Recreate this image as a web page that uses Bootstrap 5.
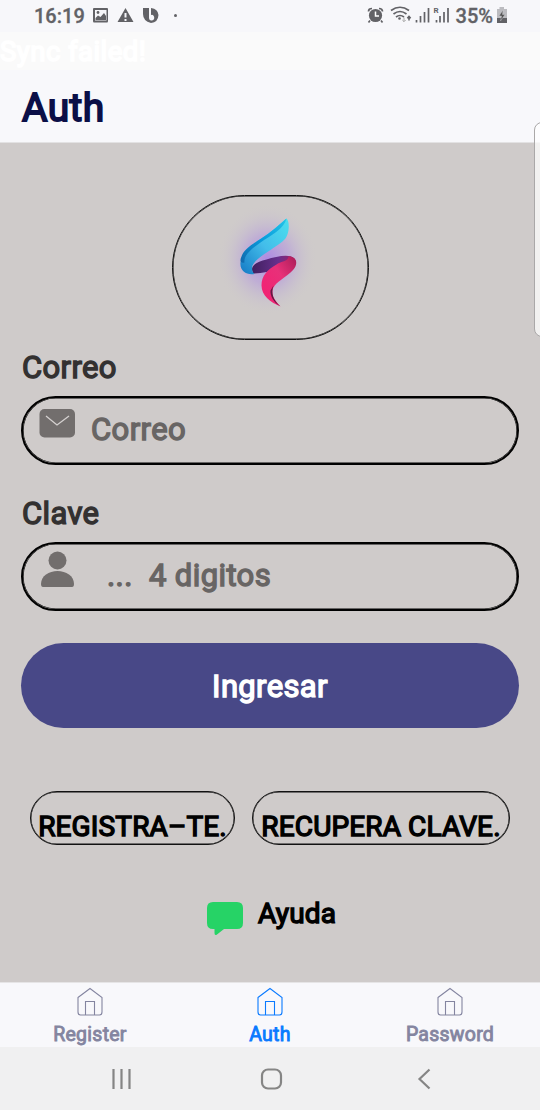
<!DOCTYPE html>
<html lang="es">
<head>
<meta charset="utf-8">
<meta name="viewport" content="width=device-width, initial-scale=1">
<title>Auth</title>
<link href="https://cdn.jsdelivr.net/npm/bootstrap@5.3.0/dist/css/bootstrap.min.css" rel="stylesheet">
<style>
body{font-family:Roboto,"Liberation Sans",sans-serif;width:540px;height:1110px;overflow:hidden;background:#cfcbca;color:#000}
.faux{font-weight:400;-webkit-text-stroke:1.4px currentColor;white-space:pre}
.statusbar{height:32px;background:#f7f7fa;color:#626266;padding:0 32px 0 34px}
.clock{font-size:20px;font-weight:500;line-height:32px;-webkit-text-stroke:.3px currentColor}
.sync{height:38px;background:#fafafa;color:#fff;font-size:27.5px;line-height:40px;letter-spacing:.45px;-webkit-text-stroke-width:1.7px}
.topbar{height:73px;background:#f8f8fb;border-bottom:1px solid #e3e2e3;color:#0b0f47;font-size:39px;line-height:76px;padding-left:22px;letter-spacing:.4px;-webkit-text-stroke-width:1.8px}
.screen{height:839px;padding:52px 21px 0}
.logo-pill{width:197px;height:145px;border:1px solid #111;box-shadow:inset 0 0 0 .5px #111;border-radius:73px}
.lbl{height:56px;line-height:55px;font-size:31px;letter-spacing:.35px;color:#333131;padding-left:1px}
.field{height:69px;border:2px solid #000;box-shadow:inset 0 0 0 .6px #000;border-radius:35px;padding-left:16px;color:#686564;font-size:31px;letter-spacing:.4px;line-height:64px}
.enter{height:85px;margin-top:32px;border-radius:43px;background:#484887;border:0;color:#fff;font-size:31px;letter-spacing:.35px;line-height:88px;padding:0}
.enter:hover{background:#484887;color:#fff}
.pill-link{height:54px;border:1px solid #111;box-shadow:inset 0 0 0 .4px #111;border-radius:27px;font-size:28px;letter-spacing:.13px;line-height:69px;color:#000;text-decoration:none;text-align:center}
.help{font-size:28px;line-height:34px;letter-spacing:.2px;color:#000;text-decoration:none}
.tabs{height:65px;background:#f8f8fb;border-top:1px solid #e6e5e6}
.tab-item{color:#8485a0;font-size:19.5px;line-height:24px;letter-spacing:.25px;text-decoration:none;padding-top:4px;-webkit-text-stroke-width:.9px}
.tab-item svg{margin-bottom:6px}
.tab-item.on{color:#0a7aff}
.sysnav{height:63px;background:#f0f0f1;padding:0 107px 0 109px}
.edge{right:-10px;top:122px;width:16px;height:215px;border:1px solid #aaa8a8;border-radius:9px;background:rgba(255,255,255,.72)}
svg{display:block;flex:none}
</style>
</head>
<body>
<header>
  <div class="statusbar d-flex align-items-center">
    <span class="clock" style="width:49px">16:19</span>
    <svg width="96" height="32" viewBox="83 0 96 32" fill="#626266"><path fill-rule="evenodd" d="M94 8H107Q108 8 108 9V21Q108 22.500 107 22.500H94Q93 22.500 93 21V9Q93 8 94 8ZM95 10V20.500H106.500V10ZM95.500 18L98 15.500L100.500 17L104 13L106 16V20H95.500Z"/><circle cx="98" cy="12.500" r="1.400"/><path fill-rule="evenodd" d="M125.500 8L133.500 22H117.500ZM124.500 13V17.500H126.500V13ZM124.500 19V21H126.500V19Z"/><path fill-rule="evenodd" d="M143 8H149V17.500Q149 21 152 20.500Q155 19.500 154 16.500Q153 14 151 15V8Q158 9 158.500 15Q158 22.500 151 23Q143 21 143 14Z"/><circle cx="175.500" cy="15.500" r="1.500"/></svg>
    <svg class="ms-auto" width="86" height="32" viewBox="366 0 86 32" fill="none" stroke="#626266"><circle cx="375.500" cy="15.500" r="6.600" fill="#626266" stroke="none"/><path d="M375.500 11.500V16H379" stroke="#fff" stroke-width="1.500"/><path d="M368.500 11.500Q368.500 8.500 372 8.500M379 8.500Q382.500 8.500 382.500 11.500M370 20.500L368.500 22.500M381 20.500L382.500 22.500" stroke-width="1.700"/><path d="M391 10.500Q400 4 409 10.500M393.500 14Q400 9 406.500 14M396 17Q400 14 404 17" stroke-width="1.700"/><circle cx="399.500" cy="18.500" r="1.300" fill="#626266" stroke="none"/><path d="M404 17.500V21.500M402.300 20L404 21.700L405.700 20" stroke="#aaa"/><path d="M409 20.500V16.500M407.300 18.200L409 16.300L410.700 18.200" stroke-width="1.500"/><path d="M416.500 20V22.500M420.500 16V22.500M424.500 12V22.500M428.500 8V22.500M436.500 20V22.500M440 16V22.500M444 12V22.500M448 8V22.500" stroke-width="1.700"/><text x="433.500" y="13" font-size="8" font-weight="700" fill="#626266" stroke="none">R</text></svg>
    <span class="clock" style="margin-left:4px">35%</span>
    <svg width="12" height="32" viewBox="0 0 12 32" style="margin-left:3px"><path d="M1 9H3.500V7H8V9H11V23H1Z" fill="#bcbcc0"/><path d="M1 18H11V23H1Z" fill="#626266"/><path d="M7 10L3 16H5.500L4.500 21L9 14.500H6.500Z" fill="#555" stroke="#d5d5d8" stroke-width=".4"/></svg>
  </div>
  <div class="sync faux">Sync failed!</div>
  <h1 class="topbar faux mb-0">Auth</h1>
</header>
<main class="screen">
  <div class="logo-pill mx-auto overflow-hidden">
    <svg width="195" height="142" viewBox="172.500 196.500 195 142">
      <defs>
        <radialGradient id="glow"><stop offset="0" stop-color="#a982e6" stop-opacity=".9"/><stop offset=".45" stop-color="#b59bdc" stop-opacity=".6"/><stop offset=".75" stop-color="#c4b8d2" stop-opacity=".3"/><stop offset="1" stop-color="#cfcbca" stop-opacity="0"/></radialGradient>
        <linearGradient id="cyan" x1="1" y1="0" x2="0" y2="1"><stop offset="0" stop-color="#4ce0ee"/><stop offset=".5" stop-color="#43bdea"/><stop offset="1" stop-color="#1378c4"/></linearGradient>
        <linearGradient id="blue" x1="1" y1="0" x2="0" y2="1"><stop offset="0" stop-color="#25c5e8"/><stop offset=".5" stop-color="#079bdc"/><stop offset="1" stop-color="#1268ac"/></linearGradient>
        <linearGradient id="violet"><stop offset="0" stop-color="#40205f"/><stop offset=".6" stop-color="#66308d"/><stop offset="1" stop-color="#a32164"/></linearGradient>
        <linearGradient id="pink" x1="1" y1="0" x2="0" y2="1"><stop offset="0" stop-color="#a91d58"/><stop offset=".4" stop-color="#e83079"/><stop offset="1" stop-color="#f51d72"/></linearGradient>
      </defs>
      <ellipse cx="267" cy="260" rx="50" ry="56" fill="url(#glow)"/>
      <path d="M253 274C248 267 256 262 266 260C276 257 289 254 294 259C297 264 294 269 286 272L278 268C270 272 262 274 253 274Z" fill="url(#violet)"/>
      <path d="M288 257C298 257 298 267 290 273C282 280 273 284 272 291C271 298 276 302 280 307C270 303 261 296 261 286C261 276 267 270 276 265C281 261 287 263 288 257Z" fill="url(#pink)"/>
      <path d="M273 286C270 294 273 301 280 307C273 303 269.500 296 270 291Z" fill="#651743"/>
      <path d="M286 219C289.500 222 289 235 284 240C275 249 256 257 252 266C251 270 252 273 254 274.500C246 276 239 271 240 263C241 252 256 243 268 234C276 228 281 223 286 219Z" fill="url(#cyan)"/>
      <path d="M286 219C284 229 270 236 260 243C250 250 243 256 244 263C240 264 239 261 241 257C244 248 257 242 268 234C276 228 281 223 286 219Z" fill="url(#blue)"/>
    </svg>
  </div>
  <div class="lbl faux">Correo</div>
  <div class="field d-flex">
    <svg width="36" height="55" viewBox="39 398 36 55"><rect x="39.500" y="409" width="35.500" height="28.500" rx="5" fill="#726e6d"/><path d="M46 416L57 425L69 416" fill="none" stroke="#d5d1d0" stroke-width="1.300"/></svg>
    <span class="faux" style="margin-left:16px">Correo</span>
  </div>
  <div class="lbl faux" style="margin-top:21px">Clave</div>
  <div class="field d-flex">
    <svg width="36" height="55" viewBox="39 544 36 55"><circle cx="57.500" cy="560.500" r="9" fill="#726e6d"/><path d="M41 584C41 576 49 571 57.500 571S74 576 74 584Q74 587 72 587H43Q41 587 41 584Z" fill="#726e6d"/></svg>
    <span class="faux" style="margin-left:32px">...  4 digitos</span>
  </div>
  <button class="btn enter w-100 d-block faux">Ingresar</button>
  <div class="d-flex" style="margin:63px 9px 0;gap:17px">
    <a class="pill-link faux" href="#" style="width:205px">REGISTRA–TE.</a>
    <a class="pill-link faux" href="#" style="width:258px">RECUPERA CLAVE.</a>
  </div>
  <a href="#" class="help d-flex" style="margin:52px 0 0 186px">
    <svg width="36" height="40" viewBox="207 897 36 40"><path d="M213 902H237Q243 902 243 908V923Q243 929 237 929H224L217 934.500Q214.500 936 214.500 933V929H213Q207 929 207 923V908Q207 902 213 902Z" fill="#26d366"/></svg>
    <span class="faux" style="margin-left:15px">Ayuda</span>
  </a>
</main>
<nav class="tabs row g-0">
  <a href="#" class="tab-item col-4 d-flex flex-column align-items-center faux"><svg width="28" height="30" viewBox="0 0 28 30" fill="none" stroke="currentColor" stroke-width="1.100"><path d="M2 10.500L14 1.500L26 10.500V25Q26 28 23.500 28H4.500Q2 28 2 25ZM9.500 28V14.500H18.500V28"/></svg><span>Register</span></a>
  <a href="#" class="tab-item on col-4 d-flex flex-column align-items-center faux"><svg width="28" height="30" viewBox="0 0 28 30" fill="none" stroke="currentColor" stroke-width="1.100"><path d="M2 10.500L14 1.500L26 10.500V25Q26 28 23.500 28H4.500Q2 28 2 25ZM9.500 28V14.500H18.500V28"/></svg><span>Auth</span></a>
  <a href="#" class="tab-item col-4 d-flex flex-column align-items-center faux"><svg width="28" height="30" viewBox="0 0 28 30" fill="none" stroke="currentColor" stroke-width="1.100"><path d="M2 10.500L14 1.500L26 10.500V25Q26 28 23.500 28H4.500Q2 28 2 25ZM9.500 28V14.500H18.500V28"/></svg><span>Password</span></a>
</nav>
<footer class="sysnav d-flex align-items-center justify-content-between">
  <svg width="24" height="24" viewBox="0 0 24 24" stroke="#858585" stroke-width="2.200"><path d="M4.500 2V22M12.500 2V22M20.500 2V22"/></svg>
  <svg width="24" height="24" viewBox="0 0 24 24" fill="none" stroke="#858585" stroke-width="2.200"><rect x="3" y="2.500" width="19" height="19" rx="6"/></svg>
  <svg width="24" height="24" viewBox="0 0 24 24" fill="none" stroke="#858585" stroke-width="2.200"><path d="M20.500 2.500L10.500 12L20.500 21.500"/></svg>
</footer>
<div class="edge position-absolute"></div>
<script src="https://cdn.jsdelivr.net/npm/bootstrap@5.3.0/dist/js/bootstrap.bundle.min.js"></script>
</body>
</html>
